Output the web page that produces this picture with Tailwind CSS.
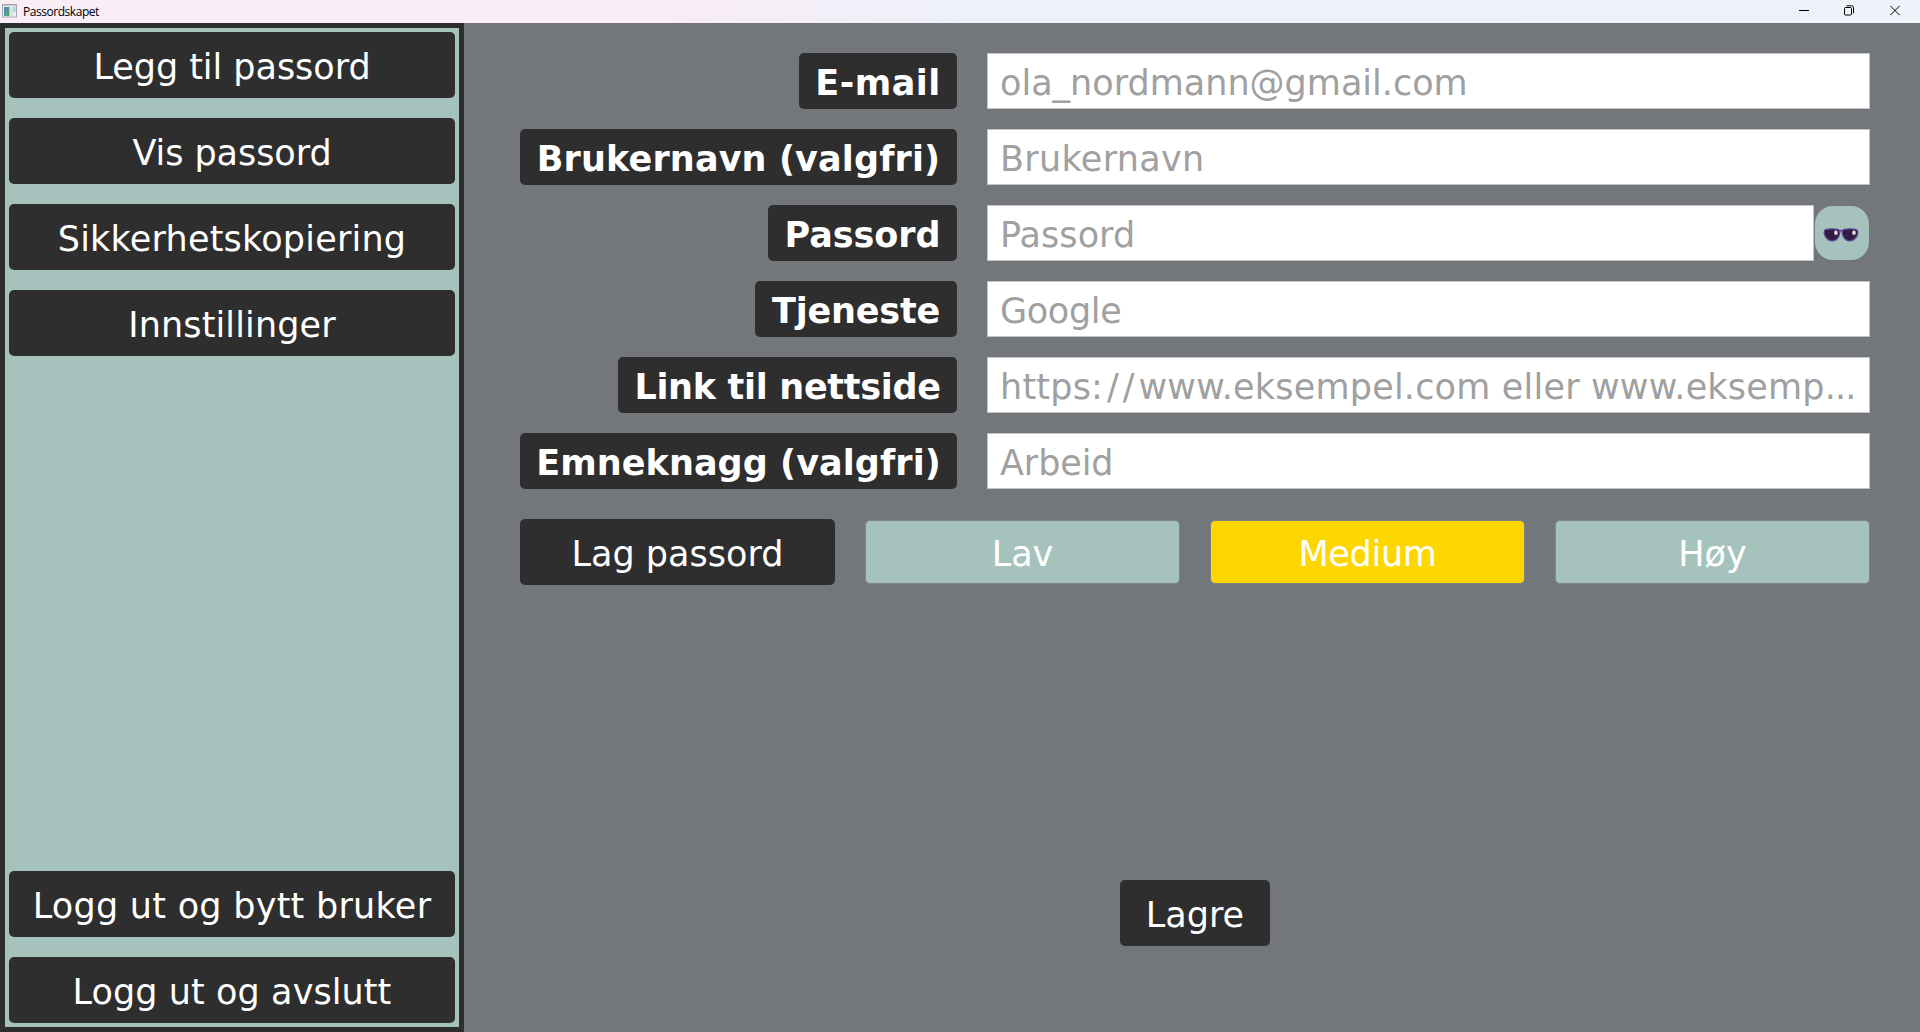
<!DOCTYPE html>
<html lang="no">
<head>
<meta charset="utf-8">
<title>Passordskapet</title>
<script src="https://cdn.jsdelivr.net/npm/@tailwindcss/browser@4"></script>
</head>
<body class="flex h-screen flex-col overflow-hidden bg-[#73767b] font-['DejaVu_Sans',Verdana,sans-serif] text-[35px] leading-[40px] whitespace-nowrap text-white">
  <header class="flex h-[23px] shrink-0 items-center justify-between bg-linear-to-r from-[#f9edf6] from-35% via-[#eef1fa] via-50% to-[#f0f2fa] text-black">
    <div class="flex items-center gap-[6px] pl-[2px]">
      <svg class="mt-[-2px] h-[14px] w-[15px]" viewBox="0 0 15 14">
        <defs>
          <linearGradient id="pane" x1="0" y1="0" x2="1" y2="1"><stop offset="0" stop-color="#4e83b8"/><stop offset="1" stop-color="#58b070"/></linearGradient>
        </defs>
        <rect x=".5" y=".5" width="14" height="12.5" fill="#f1f1f1" stroke="#a5a9b0"/>
        <rect x="1" y="1" width="13" height="1.2" fill="#c3c7cd"/>
        <rect x="2" y="3" width="5.5" height="9" fill="url(#pane)"/>
        <rect x="8.5" y="3" width="2.5" height="9" fill="#dedfe1"/>
        <rect x="11.5" y="3" width="2" height="5" fill="#9fd0c8"/>
      </svg>
      <span class="mt-px font-['Open_Sans',sans-serif] text-[12px] leading-[16px] tracking-[-0.46px]">Passordskapet</span>
    </div>
    <div class="mt-[-3px] flex items-center gap-[35px] pr-[20px]">
      <svg class="mr-px h-[11px] w-[10px]" viewBox="0 0 10 11"><path d="M0 5.5h10" stroke="#000"/></svg>
      <svg class="-ml-px mr-px h-[11px] w-[10px]" viewBox="0 0 10 11" fill="none" stroke="#000"><rect x=".5" y="2.5" width="7" height="7.5" rx="1"/><path d="M2.5 .8h5a2 2 0 0 1 2 2v5.4"/></svg>
      <svg class="h-[11px] w-[10px]" viewBox="0 0 10 11" stroke="#000"><path d="M.3 .8l9.4 9.4M9.7 .8L.3 10.2"/></svg>
    </div>
  </header>
  <main class="flex min-h-0 flex-1">
    <nav class="flex w-[464px] shrink-0 flex-col justify-between border-5 border-[#2e2e2e] bg-[#a5c3bc] p-1">
      <div class="flex flex-col gap-5">
        <div class="flex h-[66px] items-center justify-center rounded-[5px] bg-[#2e2e2e] pt-1 tracking-[-0.04px]">Legg til passord</div>
        <div class="flex h-[66px] items-center justify-center rounded-[5px] bg-[#2e2e2e] pt-1 tracking-[-0.05px]">Vis passord</div>
        <div class="flex h-[66px] items-center justify-center rounded-[5px] bg-[#2e2e2e] pt-1 tracking-[0.2px]">Sikkerhetskopiering</div>
        <div class="flex h-[66px] items-center justify-center rounded-[5px] bg-[#2e2e2e] pt-1 tracking-[0.12px]">Innstillinger</div>
      </div>
      <div class="flex flex-col gap-5">
        <div class="flex h-[66px] items-center justify-center rounded-[5px] bg-[#2e2e2e] pt-1 tracking-[0.26px]">Logg ut og bytt bruker</div>
        <div class="flex h-[66px] items-center justify-center rounded-[5px] bg-[#2e2e2e] pt-1 tracking-[0.08px]">Logg ut og avslutt</div>
      </div>
    </nav>
    <section class="flex flex-1 flex-col pt-[30px] pr-[50px] pl-[56px]">
      <div class="grid grid-cols-[437px_1fr] gap-x-[30px] gap-y-5">
        <div class="flex h-14 w-[158px] items-center justify-center justify-self-end rounded-[5px] bg-[#2e2e2e] pt-1 font-bold tracking-[0.5px]">E-mail</div>
        <div class="flex h-14 items-center border border-[#c4c4c4] bg-white pt-1 pl-3 text-[#a0a0a0]">ola_nordmann@gmail.com</div>
        <div class="flex h-14 w-[437px] items-center justify-center justify-self-end rounded-[5px] bg-[#2e2e2e] pt-1 font-bold tracking-[0.14px]">Brukernavn (valgfri)</div>
        <div class="flex h-14 items-center border border-[#c4c4c4] bg-white pt-1 pl-3 tracking-[0.3px] text-[#a0a0a0]">Brukernavn</div>
        <div class="flex h-14 w-[189px] items-center justify-center justify-self-end rounded-[5px] bg-[#2e2e2e] pt-1 font-bold tracking-[-0.05px]">Passord</div>
        <div class="flex items-center gap-px">
          <div class="flex h-14 flex-1 items-center border border-[#c4c4c4] bg-white pt-1 pl-3 tracking-[0.05px] text-[#a0a0a0]">Passord</div>
          <div class="mr-px flex size-[54px] items-center justify-center rounded-[18px] bg-[#a5c3bc] pt-[3px] pr-[2px]">
            <svg class="h-[14px] w-[36px]" viewBox="0 0 36 14">
              <path d="M15 3.4q3-1.4 6 0" fill="none" stroke="#5e4b9a" stroke-width="1.8"/>
              <path d="M3.5 1.3Q9 .4 14.500 1.300Q17 1.800 16.700 5Q16.200 9.500 12.700 11.900Q9 14 5.300 11.600Q1.500 8.900 1.200 4.800Q1.100 1.800 3.500 1.300Z" fill="#321a40" stroke="#5a4593" stroke-width="1.300"/>
              <path d="M32.500 1.300Q27 .4 21.500 1.300Q19 1.800 19.300 5Q19.800 9.500 23.300 11.900Q27 14 30.700 11.600Q34.500 8.900 34.800 4.800Q34.900 1.800 32.500 1.300Z" fill="#321a40" stroke="#5a4593" stroke-width="1.300"/>
              <ellipse cx="12.900" cy="4.800" rx="1.800" ry="2.200" fill="#e4dfe6"/>
              <ellipse cx="31" cy="4.800" rx="1.800" ry="2.200" fill="#e4dfe6"/>
            </svg>
          </div>
        </div>
        <div class="flex h-14 w-[202px] items-center justify-center justify-self-end rounded-[5px] bg-[#2e2e2e] pt-1 font-bold tracking-[-0.2px]">Tjeneste</div>
        <div class="flex h-14 items-center border border-[#c4c4c4] bg-white pt-1 pl-3 tracking-[-0.35px] text-[#a0a0a0]">Google</div>
        <div class="flex h-14 w-[339px] items-center justify-center justify-self-end rounded-[5px] bg-[#2e2e2e] pt-1 font-bold tracking-[-0.3px]">Link til nettside</div>
        <div class="flex h-14 items-center border border-[#c4c4c4] bg-white pt-1 pl-3 text-[#a0a0a0]"><p class="tracking-[0.2px]">https<span class="tracking-[4px]">://</span>www.eksempel.com eller www.eksemp<span class="tracking-[-0.9px]">...</span></p></div>
        <div class="flex h-14 w-[437px] items-center justify-center justify-self-end rounded-[5px] bg-[#2e2e2e] pt-1 font-bold tracking-[0.08px]">Emneknagg (valgfri)</div>
        <div class="flex h-14 items-center border border-[#c4c4c4] bg-white pt-1 pl-3 tracking-[-0.1px] text-[#a0a0a0]">Arbeid</div>
      </div>
      <div class="mt-[30px] grid grid-cols-4 items-center gap-[30px]">
        <div class="flex h-[66px] items-center justify-center rounded-[5px] bg-[#2e2e2e] pt-1">Lag passord</div>
        <div class="flex h-16 items-center justify-center rounded-[5px] border border-[#808586] bg-[#a5c3bc] pt-1">Lav</div>
        <div class="flex h-16 items-center justify-center rounded-[5px] border border-[#80807c] bg-[#ffd700] pt-1 tracking-[-0.3px]">Medium</div>
        <div class="flex h-16 items-center justify-center rounded-[5px] border border-[#808586] bg-[#a5c3bc] pt-1">Høy</div>
      </div>
      <div class="mt-[295px] flex h-[66px] w-[150px] items-center justify-center self-center rounded-[5px] bg-[#2e2e2e] pt-1">Lagre</div>
    </section>
  </main>
</body>
</html>
